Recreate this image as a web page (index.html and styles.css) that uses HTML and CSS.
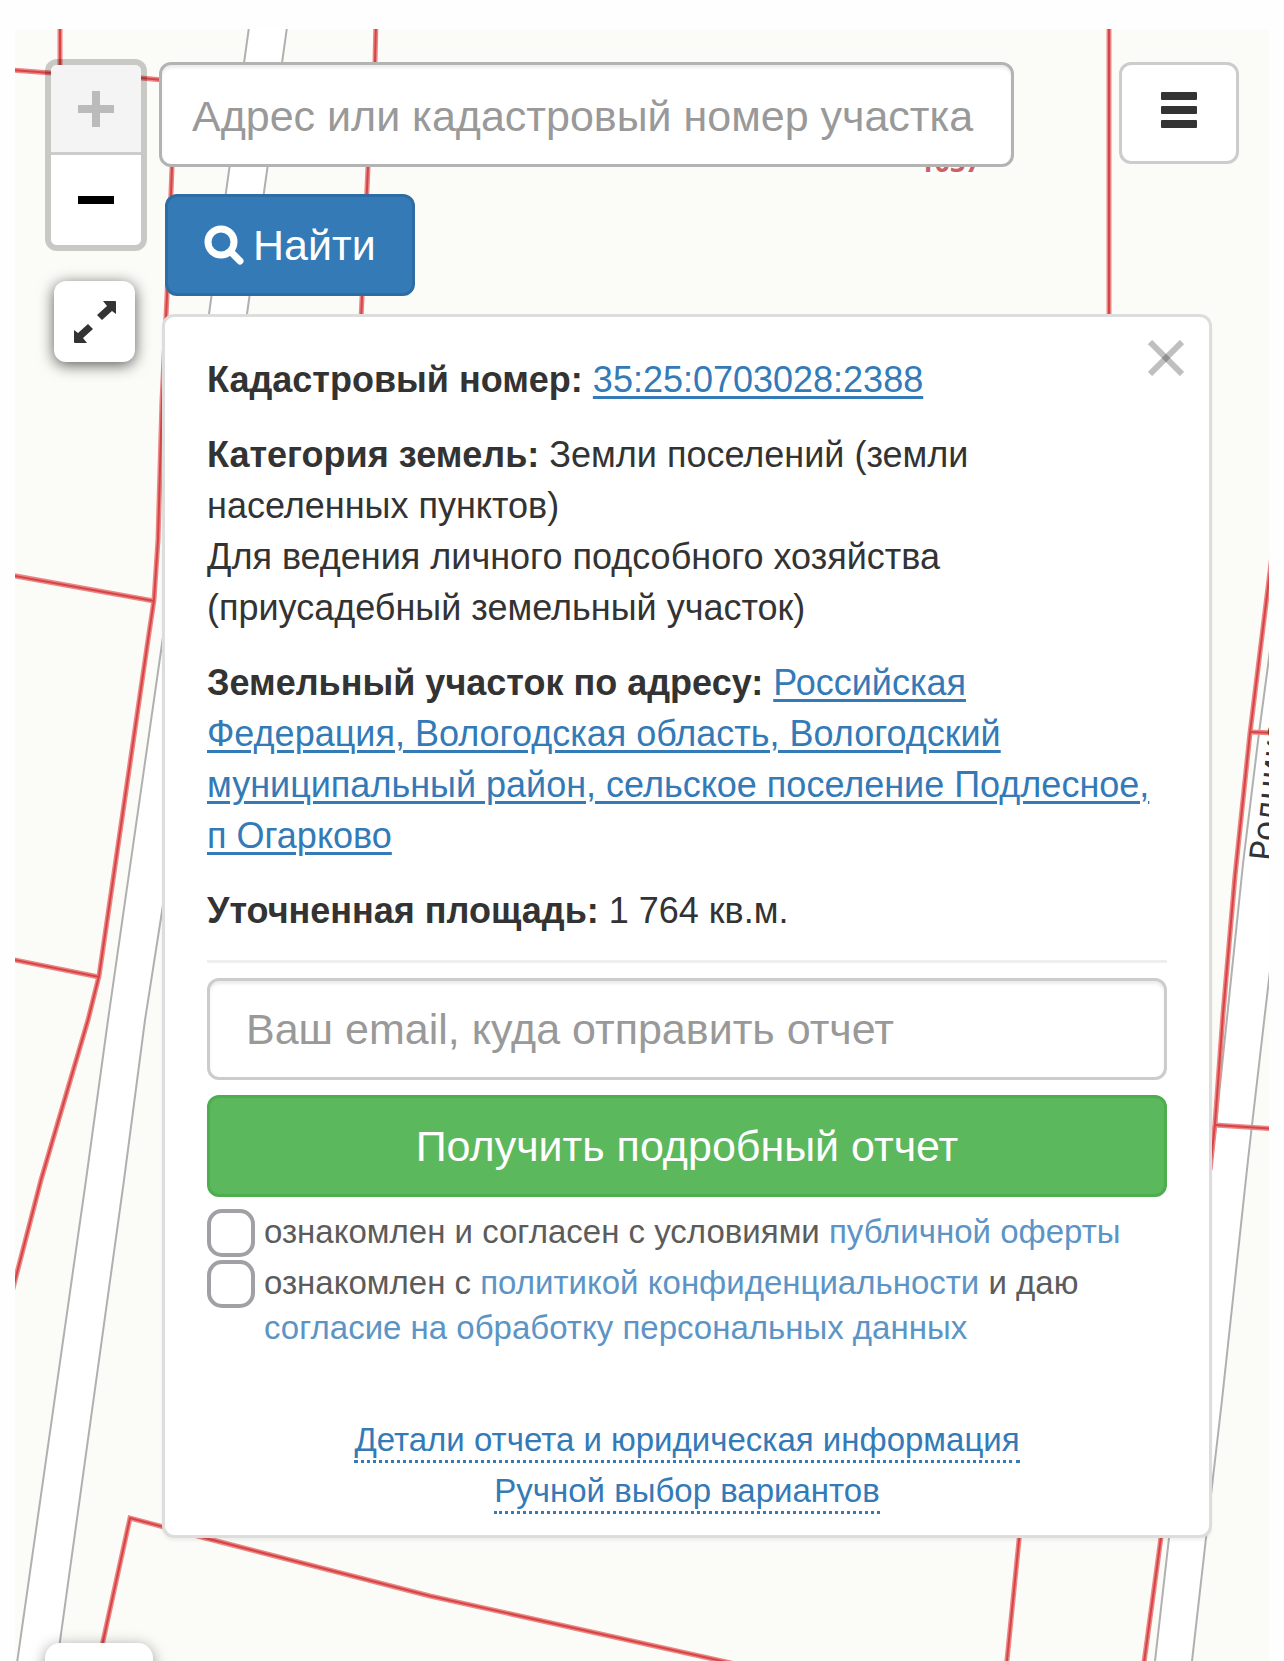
FILE: index.html
```html
<!DOCTYPE html>
<html lang="ru">

<head>
    <meta charset="UTF-8" />
    <meta name="viewport" content="width=device-width, initial-scale=1.0" />
    <title>Кадастровая карта</title>
    <link rel="stylesheet" href="styles.css">
</head>

<body>
    <main class="map">
        <svg class="map-canvas" viewBox="15 29 1254 1632" preserveAspectRatio="xMinYMin slice" aria-hidden="true">
            <defs>
                <g id="parcels">
                    <path d="M60 20 V75" />
                    <path d="M10 70 L51 73 L141 78 L174 81 L172 167 L167 296 L162 400 L158 540 L154 600 L148 640 L99 976 L88 1020 L41 1180 L12 1292" />
                    <path d="M376 20 L375 62 L368 167 L361 320" />
                    <path d="M1109 20 V320" />
                    <path d="M10 575 L154 601" />
                    <path d="M10 959 L99 977" />
                    <path d="M100 1655 L130 1518 L205 1538 L430 1596 L740 1665" />
                    <path d="M1020 1530 L1006 1670" />
                    <path d="M1162 1530 L1143 1670" />
                    <path d="M1272 555 L1250 733 L1235 876 L1223 1014 L1215 1124 L1210 1170" />
                    <path d="M1250 732 L1275 733" />
                    <path d="M1215 1125 L1275 1129" />
                </g>
            </defs>
            <!-- roads -->
            <g class="road">
                <path d="M250 20 L209 314 L163 637 L108 1020 L86 1180 L16 1670 L56 1670 L124 1180 L145 1020 L163 905 L247 314 L288 20 Z" />
                <path d="M1290 500 L1259 733 L1243 864 L1216 1124 L1169 1538 L1154 1670 L1191 1670 L1206 1538 L1222 1400 L1248 1160 L1252 1125 L1269 979 L1290 820 Z" />
            </g>
            <!-- parcel borders -->
            <use class="parcel" href="#parcels" />
            <use class="parcel-core" href="#parcels" />
            <text class="parcel-number" x="919" y="172">1037</text>
            <text class="street" transform="translate(1273 862) rotate(-84)">Родниковая</text>
        </svg>

        <div class="overlay">
            <div class="tools">
                <div class="zoom">
                    <button type="button" aria-label="Приблизить" disabled>
                        <svg viewBox="0 0 36 36"><path d="M14 0h8v14h14v8H22v14h-8V22H0v-8h14z" /></svg>
                    </button>
                    <button type="button" aria-label="Отдалить">
                        <svg viewBox="0 0 36 36"><path d="M0 14h36v8H0z" /></svg>
                    </button>
                </div>
                <button class="fullscreen" type="button" aria-label="На весь экран">
                    <svg viewBox="0 0 42 42">
                        <path d="M29 0h12q1 0 1 1v12l-4-3-10 9-5-5 10-9z" />
                        <path d="M13 42H1q-1 0-1-1V29l4 3 10-9 5 5-10 9z" />
                    </svg>
                </button>
            </div>

            <div class="content">
                <div class="topbar">
                    <form class="search" id="search">
                        <input type="text" aria-label="Адрес или кадастровый номер участка" placeholder="Адрес или кадастровый номер участка">
                    </form>
                    <button class="menu-btn" type="button" aria-label="Меню">
                        <svg viewBox="0 0 36 36">
                            <rect width="36" height="8" rx="1" />
                            <rect y="14" width="36" height="8" rx="1" />
                            <rect y="28" width="36" height="8" rx="1" />
                        </svg>
                    </button>
                </div>
                <button class="find-btn" type="submit" form="search">
                    <svg viewBox="0 0 40 40">
                        <circle cx="17" cy="17" r="13" />
                        <path d="M27 27l9 9" />
                    </svg>
                    Найти
                </button>

                <section class="card">
                    <button class="close-btn" type="button" aria-label="Закрыть">
                        <svg viewBox="0 0 36 36"><path d="M2 2l32 32" /><path d="M34 2L2 34" /></svg>
                    </button>
                    <p><b>Кадастровый номер:</b> <a href="#">35:25:0703028:2388</a></p>
                    <p><b>Категория земель:</b> Земли поселений (земли населенных пунктов)<br>Для ведения личного подсобного хозяйства (приусадебный земельный участок)</p>
                    <p><b>Земельный участок по адресу:</b> <a href="#">Российская Федерация, Вологодская область, Вологодский муниципальный район, сельское поселение Подлесное, п&nbsp;Огарково</a></p>
                    <p><b>Уточненная площадь:</b> 1 764 кв.м.</p>
                    <hr>
                    <form class="report">
                        <input class="email" type="email" aria-label="Ваш email" placeholder="Ваш email, куда отправить отчет">
                        <button class="report-btn" type="submit">Получить подробный отчет</button>
                        <div class="consent">
                            <input type="checkbox" id="offer">
                            <label for="offer">ознакомлен и согласен с условиями <a href="#">публичной оферты</a></label>
                        </div>
                        <div class="consent">
                            <input type="checkbox" id="privacy">
                            <label for="privacy">ознакомлен с <a href="#">политикой конфиденциальности</a> и даю <a href="#">согласие на обработку персональных данных</a></label>
                        </div>
                    </form>
                    <div class="more">
                        <a href="#">Детали отчета и юридическая информация</a>
                        <a href="#">Ручной выбор вариантов</a>
                    </div>
                </section>
            </div>
        </div>
        <div class="bottom-control"></div>
    </main>
</body>

</html>
```
FILE: styles.css
```css
:root {
    --land: #fbfcf7;
    --text: #333;
    --link: #337ab7;
    --border: #ccc;
}

* {
    box-sizing: border-box;
    margin: 0;
    padding: 0;
}

body {
    font-family: "Liberation Sans", Arial, sans-serif;
    font-size: 36px;
    line-height: 51px;
    color: var(--text);
    background: #fefefe;
    padding: 29px 15px 0;
}

button,
input {
    font-family: inherit;
}

button {
    cursor: pointer;
}

.map {
    position: relative;
    min-height: calc(100vh - 29px);
    background: var(--land);
    overflow: hidden;
}

.map-canvas {
    position: absolute;
    inset: 0;
    width: 100%;
    height: 100%;
}

.road {
    fill: #fff;
    stroke: #b0b0b0;
    stroke-width: 2;
}

.parcel,
.parcel-core {
    fill: none;
    stroke: #ec8585;
    stroke-width: 5;
}

.parcel-core {
    stroke: #d64545;
    stroke-width: 2;
}

.parcel-number {
    font-family: "Open Sans", sans-serif;
    font-size: 27px;
    font-weight: bold;
    fill: #d06060;
    stroke: #fff;
    stroke-width: 6;
    paint-order: stroke;
}

.street {
    font-family: "Noto Sans", sans-serif;
    font-size: 34px;
    fill: #333;
}

.overlay {
    position: relative;
    display: flex;
    align-items: flex-start;
    gap: 12px;
    padding: 30px 30px 123px;
}

/* map buttons */
.tools {
    display: flex;
    flex-direction: column;
    align-items: center;
    gap: 30px;
    width: 102px;
}

.zoom {
    width: 100%;
    border: 6px solid rgba(0, 0, 0, 0.2);
    border-radius: 12px;
    background: #fff;
    background-clip: padding-box;
    overflow: hidden;
}

.zoom button {
    display: flex;
    align-items: center;
    justify-content: center;
    width: 100%;
    height: 90px;
    border: none;
    background: #fff;
}

.zoom button:disabled {
    border-bottom: 3px solid var(--border);
    background: #f4f4f4;
    fill: #bbb;
}

.zoom svg,
.menu-btn svg,
.close-btn svg {
    display: block;
    width: 36px;
    height: 36px;
}

.fullscreen {
    display: flex;
    align-items: center;
    justify-content: center;
    width: 81px;
    height: 81px;
    margin-right: 3px;
    border: none;
    border-radius: 12px;
    background: #fff;
    box-shadow: 0 3px 15px rgba(0, 0, 0, 0.65);
}

.fullscreen svg {
    width: 42px;
    height: 42px;
    fill: var(--text);
}

.bottom-control {
    position: absolute;
    left: 30px;
    bottom: -90px;
    width: 108px;
    height: 108px;
    border-radius: 15px;
    background: #fff;
    box-shadow: 0 3px 15px rgba(0, 0, 0, 0.4);
}

/* search */
.content {
    flex: 1;
    min-width: 0;
    padding-top: 3px;
}

.topbar {
    display: flex;
    align-items: flex-start;
    gap: 105px;
}

.search {
    flex: 1;
}

.search input,
.email {
    display: block;
    width: 100%;
    height: 102px;
    padding: 0 36px;
    border: 3px solid var(--border);
    border-radius: 12px;
    background: #fff;
    box-shadow: inset 0 3px 3px rgba(0, 0, 0, 0.075);
    font-size: 43px;
    color: #555;
}

.search input {
    height: 105px;
    padding: 3px 30px 0;
    border-color: #b3b3b3;
}

input::placeholder {
    color: #999;
    opacity: 1;
}

.menu-btn {
    display: flex;
    justify-content: center;
    width: 120px;
    height: 102px;
    padding-top: 27px;
    border: 3px solid var(--border);
    border-radius: 12px;
    background: #fff;
    fill: var(--text);
}

.find-btn {
    display: flex;
    align-items: center;
    gap: 9px;
    height: 102px;
    margin: 27px 0 0 6px;
    padding: 0 36px;
    border: 3px solid #2e6da4;
    border-radius: 12px;
    background: var(--link);
    color: #fff;
    font-size: 43px;
}

.find-btn svg {
    width: 40px;
    height: 40px;
    fill: none;
    stroke: #fff;
    stroke-width: 7;
    stroke-linecap: round;
}

/* parcel card */
.card {
    position: relative;
    margin: 18px 27px 0 3px;
    padding: 37px 42px 21px;
    border: 3px solid #ddd;
    border-radius: 12px;
    background: #fff;
    box-shadow: 0 3px 3px rgba(0, 0, 0, 0.05);
}

.close-btn {
    position: absolute;
    top: 23px;
    right: 25px;
    border: none;
    background: none;
}

.close-btn svg {
    fill: none;
    stroke: rgba(0, 0, 0, 0.25);
    stroke-width: 6;
}

.card p {
    margin-bottom: 24px;
}

.card a {
    color: var(--link);
    text-underline-offset: 4px;
    text-decoration-thickness: 3px;
}

.card hr {
    margin-bottom: 15px;
    border: none;
    border-top: 3px solid #eee;
}

.report-btn {
    width: 100%;
    height: 102px;
    margin: 15px 0 12px;
    border: 3px solid #4cae4c;
    border-radius: 12px;
    background: #5cb85c;
    color: #fff;
    font-size: 43px;
}

.consent {
    display: flex;
    align-items: flex-start;
    gap: 9px;
    margin-bottom: 3px;
    font-size: 33px;
    line-height: 45px;
    color: #5c5c5c;
}

.consent input {
    flex: none;
    appearance: none;
    width: 48px;
    height: 48px;
    border: 4px solid #a0a0a5;
    border-radius: 15px;
    background: #fff;
}

.consent .card a,
.consent a {
    text-decoration: none;
    opacity: 0.8;
}

.more {
    display: flex;
    flex-direction: column;
    align-items: center;
    gap: 8px;
    margin-top: 70px;
    font-size: 33px;
    line-height: 40px;
}

.more a {
    border-bottom: 3px dotted var(--link);
    text-decoration: none;
}
```
